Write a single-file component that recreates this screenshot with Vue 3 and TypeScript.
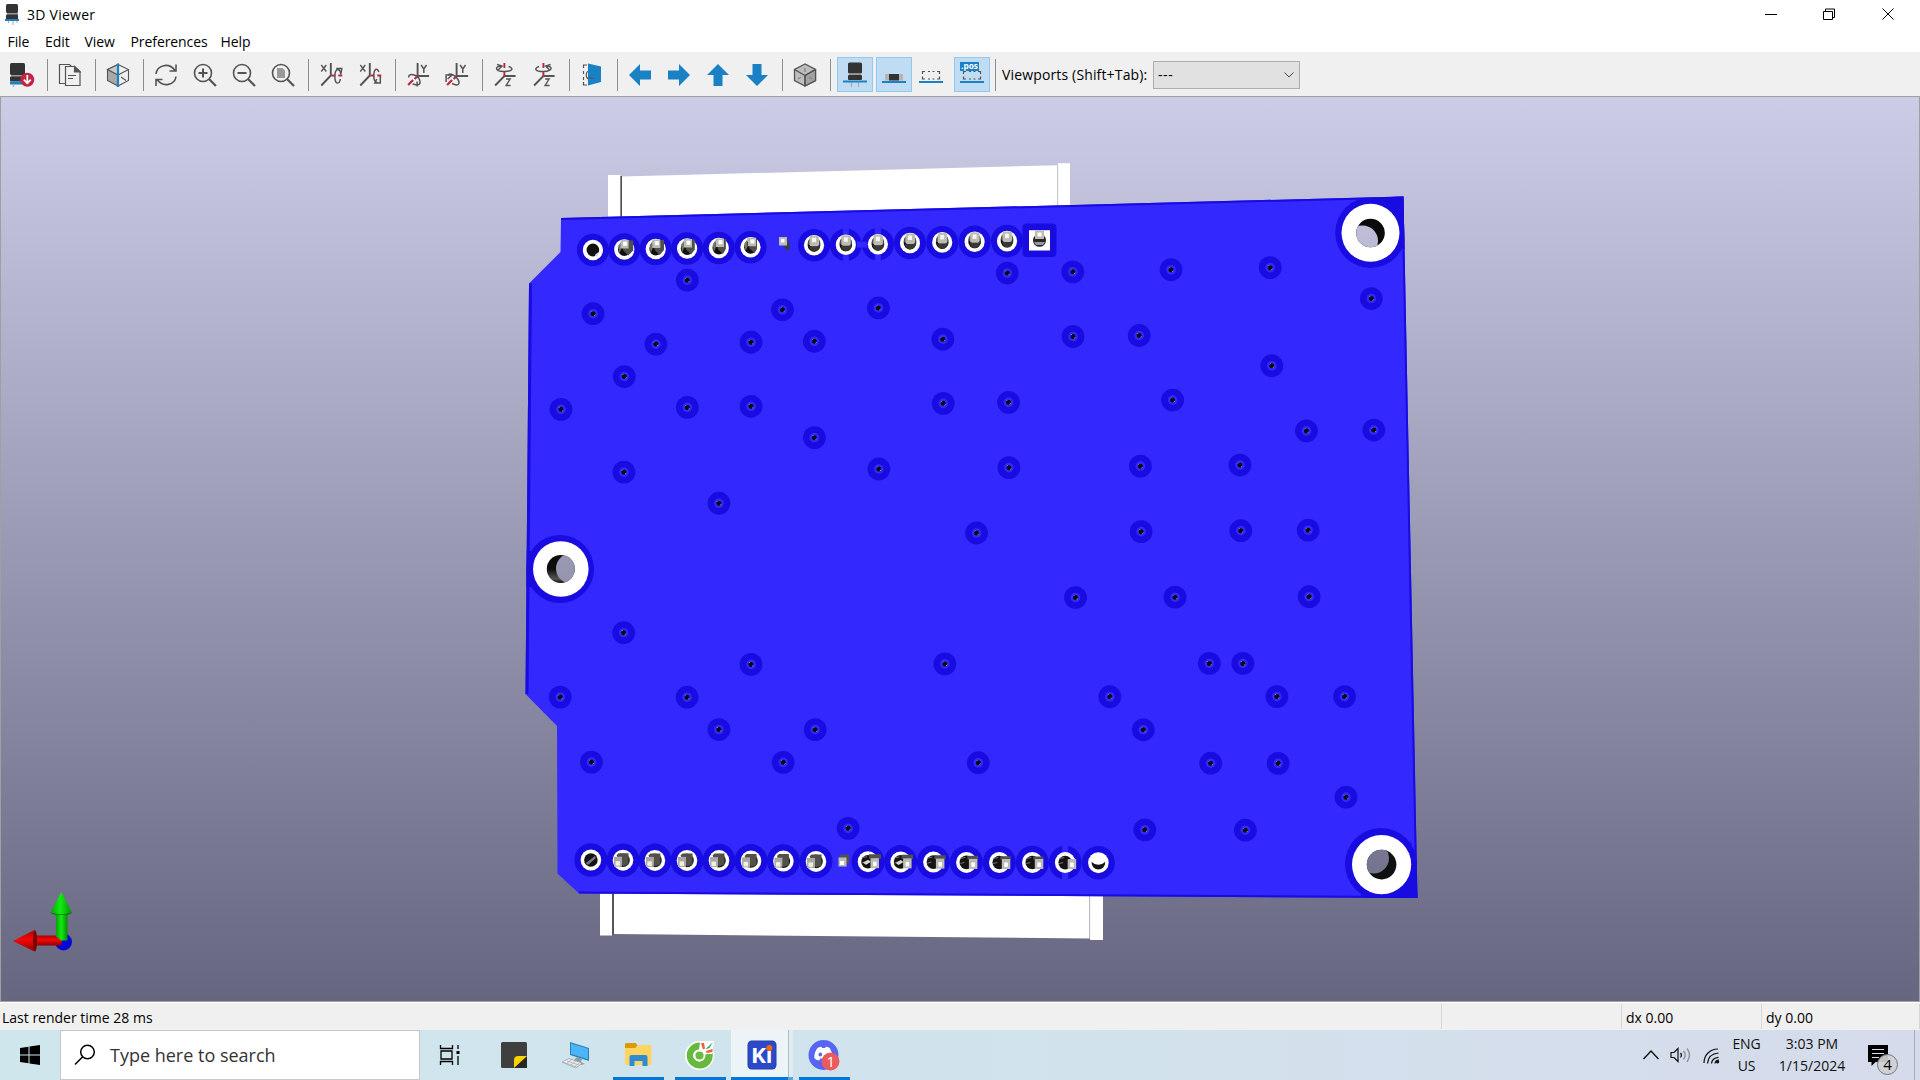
<script setup lang="ts">
type Pt = [number, number]

const menus = [
  { label: 'File', w: 37.5 },
  { label: 'Edit', w: 39.5 },
  { label: 'View', w: 46 },
  { label: 'Preferences', w: 90 },
  { label: 'Help', w: 45 },
]

const tools: string[] = [
  'reload', '|', 'copy', '|', 'raytrace', '|', 'refresh', 'zoomin', 'zoomout', 'zoomfit', '|',
  'rx1', 'rx2', '|', 'ry1', 'ry2', '|', 'rz1', 'rz2', '|', 'flip', '|',
  'left', 'right', 'up', 'down', '|', 'ortho', '|', 'th', 'smd', 'virtual', 'pos', '|',
]
const active = new Set(['th', 'smd', 'pos'])

const K = 1920 / 1568
const vias: Pt[] = ([
  [561, 228.8], [484, 256.2], [638.7, 253], [717, 251.5], [822.3, 223], [875.8, 222], [956, 220.3], [1037, 218.6], [1119.6, 243.8],
  [535.3, 281], [613, 279.5], [664.7, 278.7], [769.7, 277], [876, 274.8], [930, 274], [1038.3, 298.7], [509.5, 307.5],
  [457.8, 334.3], [561, 332.7], [613, 331.8], [770, 329.4], [823.3, 328.6], [957.3, 326.7], [1066.6, 351.9], [1121.6, 351.2],
  [664.8, 357.4], [509.2, 385.6], [717.4, 383], [823.6, 381.9], [931, 380.7], [1012.3, 379.8], [586.8, 411], [797.2, 435.3],
  [931.6, 434.2], [1013, 433.4], [1068, 433], [878, 488], [959.3, 487.7], [1068.8, 487.3], [509, 516.7], [613, 542.6],
  [771.3, 542.2], [987.3, 541.8], [1014.7, 541.8], [457.2, 569.3], [560.8, 569.4], [586.8, 595.8], [665.4, 595.9],
  [906, 569], [1042.5, 568.9], [1097.7, 568.9], [933.4, 596], [482.7, 622.4], [639.3, 622.6], [798.6, 622.9],
  [988.4, 623.3], [1043.5, 623.4], [1098.9, 651], [692.3, 676.5], [934.6, 677.7], [1016.7, 678],
] as Pt[]).map(([x, y]) => [x * K + 0.4, y * K])

const topPads: Pt[] = [
  [592.9, 250], [624.3, 249.5], [655.7, 249], [687.1, 248.5], [718.8, 248], [750.5, 247.2],
  [814, 245.2], [845.8, 244.8], [877.9, 244.2], [910, 243], [942.2, 242.4], [974.6, 241.8], [1007, 241.1],
]
const botPads: Pt[] = [
  [590.9, 860], [623, 860.2], [654.9, 860.4], [687, 860.4], [719, 860.6], [751, 860.9], [783.4, 861.1], [816, 861.4],
  [868, 861.7], [900.6, 861.9], [933.4, 862.1], [966.4, 862.4], [999.3, 862.5], [1032.3, 862.5], [1065.2, 862.6], [1098.4, 862.7],
]
</script>

<template>
  <div class="screen">
    <header class="title">
      <svg class="appicon" width="16" height="22" viewBox="0 0 16 22">
        <path d="M3.500 15v5M8 16v6M12 15v5" stroke="#aaa" />
        <rect x="1" y="1" width="12" height="9" rx="1.500" fill="#333" />
        <rect x="2" y="10" width="11" height="2" fill="#999" />
        <rect x="1" y="11.500" width="12" height="5" rx="1" fill="#333" />
        <rect x="0" y="16" width="14" height="2" fill="#1a81c4" />
      </svg>
      <span class="name">3D Viewer</span>
      <svg class="wc" width="140" height="28" viewBox="0 0 140 28" fill="none" stroke="#000" stroke-width="1">
        <path d="M5 14.500h12M63.500 11.500h9v8h-9zM65.500 11v-2h9v8.500h-2M122.500 8.500l11 11M133.500 8.500l-11 11" />
      </svg>
    </header>
    <nav class="menu">
      <span v-for="m in menus" :key="m.label" :style="{ width: m.w + 'px' }">{{ m.label }}</span>
    </nav>
    <div class="toolbar">
      <template v-for="(t, i) in tools" :key="i">
        <i v-if="t === '|'" class="sep"></i>
        <div v-else class="cell">
          <div class="btn" :class="{ on: active.has(t) }">
            <svg width="24" height="24" viewBox="0 0 24 24" fill="none" stroke="#545454" stroke-width="1.600">
              <g v-if="t === 'reload'" stroke="none">
                <rect x="0" y="0" width="15" height="12" rx="1.500" fill="#333" />
                <rect x="1" y="12" width="13" height="2" fill="#999" /><rect x="0" y="13.500" width="13" height="5" rx="1" fill="#333" />
                <rect x="0" y="18.500" width="12" height="3" fill="#1a81c4" />
                <path d="M3.500 22v2" stroke="#bbb" />
                <circle cx="17.300" cy="16.700" r="7" fill="#bf2641" />
                <path d="M17.300 12v8M13.800 16.700l3.500 3.500 3.500-3.500" stroke="#fff" stroke-width="1.700" fill="none" />
              </g>
              <g v-else-if="t === 'copy'" stroke-width="1.200">
                <path d="M7 20.500H1.500V1.500h10l2 2M7.500 3.500h9l5.500 5v14H7.500zM10 12.500h8M10 15.500h5" />
                <path d="M16.500 3.500v5.500H22z" fill="#545454" />
              </g>
              <g v-else-if="t === 'raytrace'" stroke-width="1.100">
                <path d="M12 1.500L1.500 6.500v11L12 23z" fill="#a8a8a8" /><path d="M12 1.500L1.500 6.500 12 12z" fill="#c8c8c8" />
                <path d="M12 1.500l10.500 5v11L12 23M12 12l10.500-5.500M15 14l5 3.500" />
                <path d="M12 .5v23.500" stroke="#1a81c4" stroke-width="2.200" />
              </g>
              <path v-else-if="t === 'refresh'" d="M2 11C3 2 15-1 21 7.500M22 1.500v6.500h-6.500M22 13.500C21 22 9 25 3 16.500M2 23v-6.500h6.500" />
              <g v-else-if="t.startsWith('zoom')">
                <circle cx="10" cy="10" r="8.500" /><path d="M16 16l7 7" stroke-width="2.200" />
                <path v-if="t === 'zoomin'" d="M5.500 10h9M10 5.500v9" stroke-width="2" />
                <path v-if="t === 'zoomout'" d="M5.500 10h9" stroke-width="2" />
                <path v-if="t === 'zoomfit'" d="M6 5h5.500L14 7.500V15H6z" fill="#999" stroke="none" />
              </g>
              <g v-else-if="t.startsWith('rx')" transform="translate(.8 0)">
                <path d="M11 0v12.500L1.500 22.500" stroke-width="1.900" />
                <path d="M1.500 2l5 6.500M6.500 2l-5 6.500" stroke-width="1.400" />
                <path d="M11.500 12.500h4M18.500 12.500h4" stroke="#bf2641" stroke-width="1.900" />
                <g v-if="t === 'rx1'" stroke-width="1.500">
                  <path d="M18 20c-4 1-4-13 0-13.500 2 0 2.500 2 2.800 4M16.500 5.500l5.500 0-1 6" /><path d="M18 20q2 0 2.500-4" />
                </g>
                <g v-else stroke-width="1.500">
                  <path d="M20 9C18.500 4 15 6 15 12.500c0 4 1 7 3.500 7M21.500 13v7H16l2-4" />
                </g>
              </g>
              <g v-else-if="t.startsWith('ry')" transform="translate(.6 0)">
                <path d="M11 0v13H22.500" stroke-width="1.900" />
                <path d="M14.500 2l2.700 4 2.700-4M17.200 6v4" stroke-width="1.500" />
                <path d="M11 13L8 16M6.500 17L1.500 22" stroke="#bf2641" stroke-width="2.200" />
                <path v-if="t === 'ry1'" d="M2 14.500c0-6 11-2 11.500 4.500 0 2-1.500 3-3.500 3l-4-1M10.500 18.500v5" stroke-width="1.500" />
                <path v-else d="M.5 19v-7h6L2 16M2 12.500c3-4 11 2 11.500 7.500-.5 3-4 2-7 .5" stroke-width="1.500" />
              </g>
              <g v-else-if="t.startsWith('rz')" transform="translate(.6 0)">
                <path d="M1.500 22.500L10.800 13H22" stroke-width="1.900" />
                <path d="M10.800 0v5M10.800 9v4" stroke="#bf2641" stroke-width="1.900" />
                <path d="M12.500 16h4L12.500 22.500H17" stroke-width="1.400" />
                <path v-if="t === 'rz1'" d="M9 3C1 2.500.5 8 10 8.500 20 8.500 20 5 15 3.500M3.500 1.500L8.500 3 4.500 7" stroke-width="1.400" />
                <path v-else d="M12.500 3C20.500 2.500 21 8 11 8.500 1.500 8.500 1.500 5 6.500 3.500M18 1.500L13 3l4 4" stroke-width="1.400" />
              </g>
              <g v-else-if="t === 'flip'" stroke-width="1.200" transform="translate(1 0)">
                <path d="M6 2H2.500v3M2.500 8v3M2.500 14v3M2.500 19v3H6M9 7.500c-5 1-5 8 0 9" />
                <path d="M7 .5l13 3V19l-13 3.500z" fill="#1a81c4" stroke="none" />
                <path d="M7.500 14.500l5 1" />
              </g>
              <g v-else-if="t === 'left' || t === 'right' || t === 'up' || t === 'down'" stroke="none">
                <path d="M1 12L12 1v6.500h11v9H12V23z" fill="#1a81c4"
                  :transform="({ left: '', right: 'rotate(180 12 12)', up: 'rotate(90 12 12)', down: 'rotate(270 12 12)' } as Record<string, string>)[t]" />
              </g>
              <g v-else-if="t === 'ortho'" stroke-width="1.300">
                <path d="M12 1L1.500 6.500v11L12 23l10.500-5.500v-11z" fill="#bdbdbd" />
                <path d="M12 12.500l10.500-6v11L12 23z" fill="#a3a3a3" />
                <path d="M1.500 6.500l10.500 6 10.500-6M12 12.500V23" />
                <path d="M12 5v4M5 16l3-2M16 14l3 2" stroke="#888" />
              </g>
              <g v-else-if="t === 'th'" stroke="none">
                <path d="M8.500 19v5M15.500 19v5" stroke="#aaa" stroke-width="1.200" />
                <rect x="5" y="-.500" width="14" height="11" rx="1.500" fill="#333" /><rect x="6" y="10.500" width="12" height="2" fill="#999" />
                <rect x="5" y="12" width="14" height="5" rx="1" fill="#333" /><rect y="17.500" width="24" height="2" fill="#1a81c4" />
              </g>
              <g v-else-if="t === 'smd'" stroke="none">
                <rect x="3" y="11" width="18" height="6.500" fill="#b4b4b4" /><rect x="7" y="11" width="10" height="6.500" fill="#333" />
                <rect y="18" width="24" height="2" fill="#1a81c4" />
              </g>
              <g v-else>
                <path d="M3.500 11V8.500H6M9 8.500h2M13.500 8.500h2M18 8.500h2.500V11M3.500 13.500v2.500H6M9 16h2M13.500 16h2M18 16h2.500v-2.500" stroke-width="1.200" />
                <rect y="18" width="24" height="2" fill="#1a81c4" stroke="none" />
                <g v-if="t === 'pos'" stroke="none">
                  <rect x="0" y="-1" width="19" height="9" fill="#1a81c4" />
                  <text x="1" y="5.500" class="postext" textLength="17" lengthAdjust="spacingAndGlyphs">.pos</text>
                </g>
              </g>
            </svg>
          </div>
        </div>
      </template>
      <span class="vplabel">Viewports (Shift+Tab):</span>
      <div class="select"><span>---</span>
        <svg width="12" height="8" viewBox="0 0 12 8" fill="none" stroke="#444"><path d="M1.500 1.500L6 6l4.500-4.500" /></svg>
      </div>
    </div>

    <svg class="canvas" width="1920" height="906" viewBox="0 96 1920 906">
      <defs>
        <linearGradient id="bg" gradientUnits="userSpaceOnUse" x1="0" y1="97" x2="0" y2="1001">
          <stop offset="0" stop-color="#cccce6" /><stop offset="1" stop-color="#666680" />
        </linearGradient>
        <linearGradient id="grn" x1="0" x2="1" y1="0" y2="0">
          <stop offset="0" stop-color="#0a9c0a" /><stop offset=".45" stop-color="#10ee10" /><stop offset="1" stop-color="#088a08" />
        </linearGradient>
        <linearGradient id="red" x1="0" x2="0" y1="0" y2="1">
          <stop offset="0" stop-color="#b00000" /><stop offset=".45" stop-color="#f40808" /><stop offset="1" stop-color="#900000" />
        </linearGradient>
        <linearGradient id="barrel" x1="0" x2="0" y1="0" y2="1">
          <stop offset=".5" stop-color="#0c0c0c" /><stop offset=".85" stop-color="#55554f" /><stop offset="1" stop-color="#111" />
        </linearGradient>
        <clipPath id="board"><path d="M561 218L1403.500 196.500 1417.500 898 579 893.500 557.500 873.500 557 726 525.500 694 529 283.500 560.500 252z" /></clipPath>
        <clipPath id="h1"><circle cx="1370.500" cy="233" r="14.300" /></clipPath>
        <clipPath id="h2"><circle cx="560.800" cy="569" r="14" /></clipPath>
        <clipPath id="h3"><circle cx="1381.600" cy="864.600" r="14.800" /></clipPath>
      </defs>
      <rect y="96" width="1920" height="906" fill="#a0a0a0" />
      <rect x="1" y="97" width="1918" height="904" fill="url(#bg)" />

      <g fill="#fff">
        <path d="M608 175h12.500v45H608zM622 176.500L1057.500 165.300V220H622zM1058 163.300h12V215h-12z" />
        <path d="M600 890h12v45.500h-12zM614 890h475.500v48.500L614 934zM1090 890h13v50h-13z" />
      </g>
      <path d="M621.200 176v44M613 890v44.500" stroke="#51514c" stroke-width="1.600" />
      <path d="M1057.700 165v45M1089.700 890v48" stroke="#bbb" stroke-width=".8" />

      <g clip-path="url(#board)">
        <rect x="520" y="190" width="900" height="710" fill="#3329ff" />
        <path d="M561 218L1403.500 196.500 1417.500 898M579 893.500L1417 898" fill="none" stroke="#180ce0" stroke-width="4" />
        <path d="M529 283.500L525.500 694" stroke="#180ce0" stroke-width="6" />
        <g fill="#180ce0">
          <path d="M1350 203l54-8 5 58z" /><circle cx="1370.500" cy="232.700" r="35.300" />
          <circle cx="560" cy="569" r="34" /><path d="M526 551h14v36h-14z" />
          <circle cx="1381" cy="864" r="36" /><path d="M1361 892l50-50 8 57h-58z" />
          <circle v-for="(p, i) in vias" :key="'v' + i" :cx="p[0]" :cy="p[1]" r="11.400" />
          <ellipse v-for="(p, i) in topPads" :key="'t' + i" :cx="p[0]" :cy="p[1]" rx="16" ry="16.300" />
          <ellipse v-for="(p, i) in botPads" :key="'b' + i" :cx="p[0]" :cy="p[1]" rx="16.500" ry="16.800" />
          <rect x="1022.500" y="223.500" width="34" height="33.500" rx="4" />
        </g>
        <path d="M845.800 226v38M877.900 226v38M857 244.500h10M1065.200 844v37" stroke="#3329ff" stroke-width="6" />
      </g>

      <g v-for="(p, i) in vias" :key="'h' + i">
        <circle :cx="p[0]" :cy="p[1]" r="4.800" fill="#3329ff" /><circle :cx="p[0]" :cy="p[1]" r="2.500" fill="#0b0b12" />
        <path :d="`M${p[0] - 2} ${p[1] - 1.500}l1-1M${p[0] + 1} ${p[1] + 2}l1.500-1`" stroke="#94948c" stroke-width=".9" />
      </g>

      <circle cx="1370.500" cy="232.800" r="29" fill="#fff" />
      <circle cx="1370.500" cy="233" r="14.300" fill="#0a0a0a" />
      <circle cx="1362.500" cy="241" r="15.500" fill="url(#bg)" clip-path="url(#h1)" />
      <circle cx="560.800" cy="569" r="27.800" fill="#fff" />
      <circle cx="560.800" cy="569" r="14" fill="url(#barrel)" />
      <ellipse cx="570.500" cy="568.500" rx="14.500" ry="15" fill="url(#bg)" clip-path="url(#h2)" />
      <circle cx="1381.600" cy="864.600" r="29.600" fill="#fff" />
      <circle cx="1381.600" cy="864.600" r="14.800" fill="#101010" />
      <circle cx="1373.500" cy="858" r="15.500" fill="url(#bg)" clip-path="url(#h3)" />

      <g v-for="(p, i) in topPads" :key="'tp' + i" :transform="`translate(${p[0]} ${p[1]})`">
        <ellipse rx="10.100" ry="10.300" fill="#fff" />
        <ellipse rx="6.300" ry="6.500" fill="#10100f" />
        <template v-if="i === 0"><path d="M2 5l3.500-3v3L3 7z" fill="#dcdce8" /></template>
        <template v-else-if="i < 6">
          <path :d="`M-3 -9H${9.500 - i * .6}V1L4 6-1 1z`" fill="#51514c" />
          <path d="M-6-4l3-4v7l-2 5z" fill="#777770" />
          <rect :x="-4 + i * .3" y="-9.500" width="8" height="8.500" fill="#bcbcb5" /><rect :x="-1.500 + i * .3" y="-7.800" width="4" height="4" fill="#fff" />
        </template>
        <template v-else>
          <path d="M-5 1h9l2-2v3Q4 6 0 6.500-4 6-5 1z" fill="#383835" />
          <path d="M-6.300-1q0-5 3-6V0zM6.300-1q0-5-3-6V0z" fill="#51514c" />
          <rect x="-4.500" y="-9.500" width="9.500" height="10.500" rx="2" fill="#bcbcb5" /><rect x="-2" y="-7.500" width="4" height="4.500" fill="#f4f4f0" />
        </template>
      </g>
      <path d="M784 246h5l1 3.500h-4.500zM787 237.500l2.500 7V250l-3-3z" fill="#3c3c38" />
      <rect x="779" y="237" width="8" height="8.500" fill="#bcbcb5" /><rect x="781" y="239" width="3.500" height="3.500" fill="#fff" />
      <rect x="1029" y="230.200" width="21" height="20.300" fill="#fff" /><circle cx="1039.500" cy="240.300" r="6.500" fill="#282826" />
      <rect x="1035" y="230.500" width="9" height="8.500" fill="#bcbcb5" /><rect x="1037.500" y="232.500" width="4" height="4" fill="#fff" />
      <path d="M1034 242h11l-2 3h-7z" fill="#999" />

      <g v-for="(p, i) in botPads" :key="'bp' + i" :transform="`translate(${p[0]} ${p[1]})`">
        <ellipse rx="10.300" ry="10.500" fill="#fff" />
        <ellipse rx="6.800" ry="6.800" fill="#141413" />
        <path v-if="i === 0" d="M-5 3L4-4l1 2-8 7z" fill="#77778c" />
        <template v-else-if="i < 8">
          <path d="M-6.500-5l2-2H5.500V4L0 6z" fill="#51514c" />
          <rect x="-9" y="-3.500" width="8" height="10" fill="#aaa9a2" /><rect x="-7.500" y="1" width="4.500" height="4.500" fill="#efefe8" />
        </template>
        <template v-else-if="i < 15">
          <path d="M-6-4l5-1M-6 1l4-1" stroke="#777" />
          <path v-if="i < 14" :d="`M1 -${7.500 - (i - 8) * .3}H${13 - (i - 8) * .4}V-3H1z`" fill="#51514c" />
          <path v-if="i === 8 || i === 9" d="M-5 1l5-3 3 2-5 3z" fill="#d8d8d2" />
          <rect x="2.500" y="-3.500" width="8.500" height="10" fill="#bcbcb5" /><rect x="5" y="0" width="3.500" height="4.500" fill="#fff" />
        </template>
        <path v-else d="M-7-1V-7H7v6Q4 2 0 2-4 2-7-1z" fill="#fff" />
      </g>
      <path d="M840 854.500h9v9h-9z" fill="#51514c" />
      <rect x="838.500" y="857.500" width="8" height="9" fill="#bcbcb5" /><rect x="840" y="861" width="4" height="4" fill="#fff" />

      <circle cx="63.500" cy="942" r="8.500" fill="#0808d4" />
      <path d="M35 935.500h22l5 5.500-1 4.500H35z" fill="url(#red)" />
      <path d="M56 912h11.500v28.500H61l-5-4z" fill="url(#grn)" />
      <path d="M13 941l21.500-11q2.500 11 0 21.500z" fill="url(#red)" /><ellipse cx="35" cy="940.800" rx="2" ry="10.500" fill="#7c0000" />
      <path d="M61.300 892l11 21q-11 3-22 0z" fill="url(#grn)" /><path d="M50.300 912.500q11 3.500 22 0-2 2.500-11 2.500t-11-2.500" fill="#067006" />
    </svg>

    <div class="status">
      <span class="s0">Last render time 28 ms</span><span class="s1"></span><span class="s2">dx 0.00</span><span class="s3">dy 0.00</span>
    </div>

    <footer class="taskbar">
      <div class="start"><svg width="20" height="20" viewBox="0 0 20 20"><path d="M0 3l8.500-1.300v7.800H0zM9.500 1.500L20 0v9.500H9.500zM0 10.500h8.500v7.800L0 17zM9.500 10.500H20V20L9.500 18.500z" /></svg></div>
      <div class="search">
        <svg width="22" height="22" viewBox="0 0 22 22" fill="none" stroke="#000" stroke-width="1.500"><circle cx="13.500" cy="8" r="6.800" /><path d="M8.700 12.800L1 20.500" /></svg>
        <span>Type here to search</span>
      </div>
      <div class="tv"><svg width="22" height="20" viewBox="0 0 22 20" fill="none" stroke="#000" stroke-width="1.300"><path d="M1.500 0v3.500h12V0M2 6h11v8H2zM1.500 20v-3.500h12V20M19 0v4M19 11v9" /><path d="M17.500 6h3v3h-3z" fill="#000" stroke="none" /></svg></div>
      <div class="app">
        <svg width="28" height="30" viewBox="0 0 28 30"><rect x="1" y="2" width="26" height="26" rx="1.500" fill="#3f3f3f" /><path d="M14 28l13-12v12z" fill="#272727" /><path d="M14 28v-8q0-4 4.500-4H27z" fill="#fbd400" /></svg>
      </div>
      <div class="app">
        <svg width="30" height="30" viewBox="0 0 30 30"><path d="M9 2l19 6v13L9 15z" fill="#2e7fb5" /><path d="M10 3.500l17 5.300v10.500L10 14z" fill="#4db4f5" /><path d="M16 17l5 2-1 3 4 2-4 1-8-4z" fill="#8b9da8" /><path d="M1 22l7-3.500 13 4.500-6 5z" fill="#ececec" stroke="#9aa4aa" stroke-width=".8" /><path d="M3 22.500l13 4.500M6 21l12 4M5 24l6-4.500M9 25.500l6-4.500M13 27l6-4.500" stroke="#a5afb5" stroke-width=".7" /></svg>
      </div>
      <div class="app run">
        <svg width="28" height="30" viewBox="0 0 28 30"><path d="M1 4.500q0-1.500 1.500-1.500h9l2 2-2 3H1z" fill="#dd9a00" /><path d="M1 8h11l2-3h12q1.500 0 1.500 1.500V23q0 2-2 2H3q-2 0-2-2z" fill="#ffd561" /><path d="M5.500 26V17q0-2 2-2h14q2 0 2 2v9h-5v-5h-8v5z" fill="#2e8ad2" /></svg>
      </div>
      <div class="app run">
        <svg width="30" height="30" viewBox="0 0 30 30"><circle cx="14.500" cy="15.500" r="14.500" fill="#fff" /><path d="M15 2.500A13 13 0 1 0 27.500 13L20 14.500A6 6 0 1 1 14 9.500z" fill="#66b93c" /><circle cx="14.500" cy="15.500" r="5" fill="#6bbb42" stroke="#fff" stroke-width="1.800" /><path d="M15 1h14l-2 13-8-1-4-4z" fill="#fff" /><path d="M16 3h3l1 5.500-2 1zM21 11l6.500-2v3l-6 1z" fill="#f15a3c" /><path d="M20 9.500L28 2l-3.500 6z" fill="#35b06a" /></svg>
      </div>
      <div class="app run cur">
        <svg width="30" height="30" viewBox="0 0 30 30"><rect x=".5" y=".5" width="29" height="29" rx="4.500" fill="#2540a8" /><rect x="1.500" y="1.500" width="27" height="27" rx="4" fill="#2b49c8" /><text x="4" y="23" class="ki" textLength="15" lengthAdjust="spacingAndGlyphs">K</text><text x="18.700" y="23" class="ki">ı</text><circle cx="22.300" cy="8" r="3" fill="#f06a10" /></svg>
      </div>
      <div class="app run">
        <svg width="32" height="32" viewBox="0 0 32 32"><circle cx="15.500" cy="16" r="15" fill="#5865f2" /><path d="M9.500 9q2.500-1.200 4-1.200l.6 1.200h3l.6-1.200q2 0 4 1.200 3 4.500 3 10-2 2-4.500 2.500l-1-2h-7l-1 2Q8 21 6.300 19q0-6 3.200-10z" fill="#fff" /><ellipse cx="12.300" cy="15.500" rx="1.800" ry="2" fill="#5865f2" /><circle cx="22.500" cy="22.500" r="9" fill="#ed5a5e" /><text x="18.500" y="27.800" class="one">1</text></svg>
      </div>
      <div class="tray">
        <svg class="ti" width="86" height="50" viewBox="0 0 86 50" fill="none" stroke="#111" stroke-width="1.400">
          <path d="M4.500 29l7.500-8 7.500 8" />
          <path d="M32 22.500h3l4-4v13l-4-4h-3zM41.500 23q2 2 0 4.500" stroke-width="1.200" />
          <path d="M44.500 21q3.500 4 0 8.500M48 18.500q5 6 0 13.500" stroke="#8a929c" />
          <path d="M65 33C65 25 71 19 79 19M68.500 33.500C69 27.500 73 23.500 79.500 23M72.500 33.500Q73 28 79.500 27.300M76 33.500q.5-3.500 4-3.500" stroke-width="1.200" /><circle cx="78.500" cy="31.800" r="1.800" fill="#111" stroke="none" />
        </svg>
        <div class="lang"><span>ENG</span><span>US</span></div>
        <div class="clock"><span>3:03 PM</span><span>1/15/2024</span></div>
        <svg class="note" width="36" height="50" viewBox="0 0 36 50"><path d="M4 15h20v17H11.500l-4 4v-4H4z" /><path d="M8 19.500h12M8 23.500h12M8 27.500h7" stroke="#dde" /><circle cx="23.500" cy="34.500" r="10" fill="#d0d0d2" fill-opacity=".92" stroke="#777" /><text x="19.300" y="40" class="four">4</text></svg>
        <i class="desk"></i>
      </div>
    </footer>
  </div>
</template>

<style>
body { margin: 0; overflow: hidden; }
</style>

<style scoped>
.screen { width: 1920px; height: 1080px; display: flex; flex-direction: column; font-family: "Open Sans", "Noto Sans", sans-serif; font-size: 14px; color: #000; background: #fff; overflow: hidden; white-space: nowrap; }
.title { height: 28px; display: flex; align-items: center; }
.appicon { margin: 0 0 0 5px; }
.name { margin-left: 6px; letter-spacing: .25px; }
.wc { margin-left: auto; margin-right: 20px; }
.menu { height: 24px; display: flex; align-items: center; padding: 2px 0 0 7.500px; box-sizing: border-box; letter-spacing: -.08px; }
.toolbar { height: 44px; background: #f0f0f0; display: flex; align-items: center; padding: 1px 0 0 4px; box-sizing: border-box; }
.sep { width: 9px; height: 32px; flex: none; background: linear-gradient(#8d8d8d, #8d8d8d) 4px 0 / 1px 32px no-repeat; }
.cell { width: 39px; flex: none; }
.btn { width: 36px; height: 35px; box-sizing: border-box; display: flex; align-items: center; justify-content: center; border: 1px solid transparent; }
.btn.on { background: #c0dcf3; border-color: #90c8f6; margin-left: 1.500px; }
.btn svg { display: block; overflow: visible; }
.postext { font: bold 8.500px "Open Sans", sans-serif; fill: #fff; }
.vplabel { margin-left: 2px; letter-spacing: .15px; width: 151px; }
.select { width: 147px; height: 28px; box-sizing: border-box; border: 1px solid #adadad; background: #e1e1e1; display: flex; align-items: center; justify-content: space-between; padding: 0 4px; }
.select span { letter-spacing: .6px; }
.canvas { display: block; height: 906px; flex: none; }
.status { height: 28px; background: #f0f0f0; display: flex; align-items: center; border-top: 1px solid #fff; box-sizing: border-box; }
.status span { height: 25px; line-height: 27px; box-sizing: border-box; border-right: 1px solid #d7d7d7; padding-left: 4px; }
.status .s0 { width: 1442px; padding-left: 2px; letter-spacing: 0; }
.status .s1 { width: 180px; }
.status .s2 { width: 140px; }
.status .s3 { width: 158px; }
.taskbar { height: 50px; display: flex; background: linear-gradient(90deg, #cfe6ed, #d0e3ec 50%, #d4dfec 75%, #d5dbea); }
.start { width: 60px; display: flex; align-items: center; justify-content: center; }
.search { width: 360px; box-sizing: border-box; border: 1px solid #c8c8c8; background: #fff; display: flex; align-items: center; padding-left: 13px; font-size: 18px; color: #333; }
.search span { margin-left: 14px; }
.tv { width: 63px; display: flex; align-items: center; padding-left: 19px; box-sizing: border-box; }
.app { width: 62px; display: flex; align-items: center; justify-content: center; position: relative; }
.run::after { content: ""; position: absolute; left: 6px; bottom: 0; width: 51px; height: 3px; background: #0078d7; }
.cur { background: linear-gradient(90deg, #ecf4f8 57px, #a9bfca 57px 58px, #dfedf3 58px); }
.cur::after { left: 0; width: 62px; background: linear-gradient(90deg, #0078d7 57px, #5aa5e0 57px); }
.tray { margin-left: auto; display: flex; align-items: center; height: 50px; }
.lang, .clock { display: flex; flex-direction: column; align-items: center; line-height: 22px; font-size: 14px; color: #111; }
.lang { width: 43px; letter-spacing: -.1px; }
.clock { width: 88px; letter-spacing: 0; }
.note { margin-left: 8px; }
.desk { width: 1px; height: 50px; background: #a5adba; margin: 0 5px 0 14px; }
.ki { font: bold 22px "Open Sans", sans-serif; fill: #fff; }
.one { font: 15px "Open Sans", sans-serif; fill: #fff; }
.four { font: 15px "Open Sans", sans-serif; fill: #000; }
</style>
